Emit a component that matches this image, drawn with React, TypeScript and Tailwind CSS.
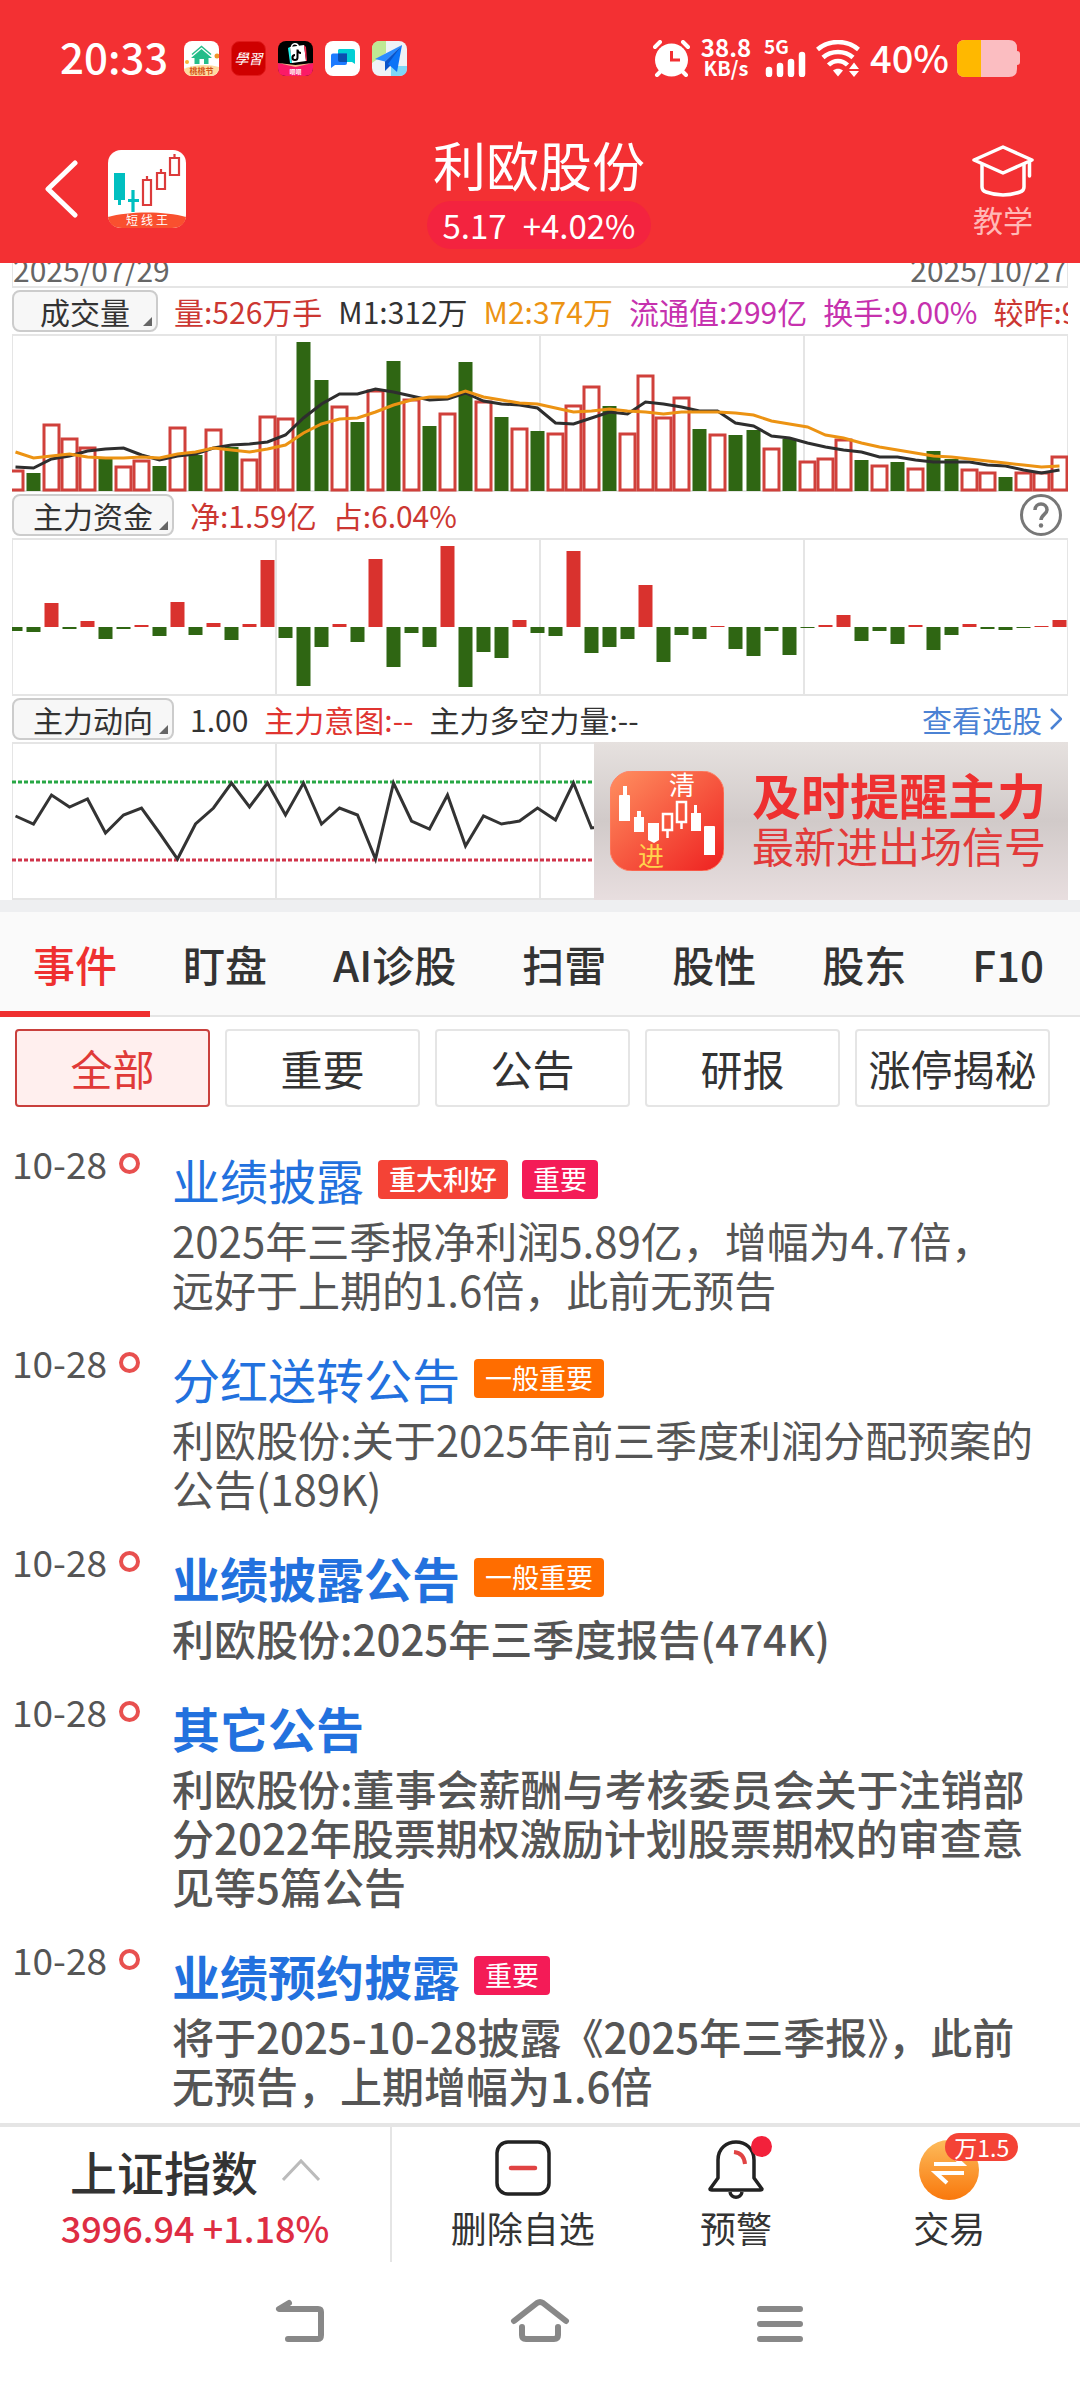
import React from 'react';

const UP = '#d9322e';
const DOWN = '#2f6613';

// [height, is up day]
const volumes: [number, boolean][] = [
  [20, true], [18, false], [66, true], [52, true], [43, true], [33, false], [24, true], [30, true], [25, false], [63, true],
  [36, false], [61, true], [44, false], [31, true], [74, true], [72, true], [149, false], [111, false], [84, true], [69, false],
  [100, true], [130, false], [91, true], [65, false], [77, true], [129, false], [89, true], [74, false], [62, true], [60, false],
  [57, true], [85, true], [104, true], [85, false], [57, true], [115, true], [73, true], [93, true], [62, false], [56, true],
  [56, false], [61, false], [42, true], [52, false], [29, true], [32, true], [51, true], [31, false], [25, true], [29, false],
  [22, true], [40, false], [32, false], [21, true], [18, true], [14, false], [18, true], [18, true], [34, true],
];

const ma1 = [
  24, 23, 32, 35, 40, 42, 43, 36, 31, 35, 37, 43, 46, 47, 49, 56, 73, 87, 97, 97, 102, 99, 95, 91, 92, 98, 90, 87, 86, 83, 68, 67,
  73, 79, 77, 89, 87, 84, 80, 80, 68, 65, 55, 53, 48, 44, 41, 39, 34, 34, 31, 29, 29, 29, 26, 25, 21, 18, 21,
];

const ma2 = [
  39, 33, 35, 37, 34, 33, 33, 34, 33, 37, 39, 43, 41, 39, 42, 46, 58, 67, 72, 73, 79, 86, 91, 94, 94, 100, 94, 91, 88, 87, 83, 79,
  80, 82, 80, 79, 77, 79, 79, 79, 78, 76, 70, 67, 64, 56, 53, 48, 44, 41, 38, 35, 34, 32, 30, 28, 26, 24, 25,
];

const funds = [
  -4, -5, 24, -2, 6, -12, -2, 2, -9, 25, -8, 4, -13, 3, 67, -11, -59, -20, 3, -15, 68, -40, -6, -20, 81, -60, -25, -31, 7, -6,
  -9, 76, -26, -20, -12, 42, -35, -8, -12, 1, -22, -29, -4, -28, -1, 2, 12, -14, -4, -17, 2, -23, -8, 3, -2, -3, -1, 1, 7,
];

const trend = [
  74, 82, 53, 65, 57, 91, 73, 66, 91, 117, 82, 66, 41, 65, 41, 73, 41, 82, 66, 73, 117, 41, 79, 87, 53, 104, 74, 82, 79, 66, 78,
  41, 86, 84,
];

const events = [
  {
    title: '业绩披露',
    tags: [
      { text: '重大利好', className: 'bg-[#f44336] font-medium' },
      { text: '重要', className: 'bg-[#f41b57] font-normal' },
    ],
    body: '2025年三季报净利润5.89亿，增幅为4.7倍，\n远好于上期的1.6倍，此前无预告',
    bold: false,
  },
  {
    title: '分红送转公告',
    tags: [{ text: '一般重要', className: 'bg-[#ff6d00] font-normal' }],
    body: '利欧股份:关于2025年前三季度利润分配预案的\n公告(189K)',
    bold: false,
  },
  {
    title: '业绩披露公告',
    tags: [{ text: '一般重要', className: 'bg-[#ff6d00] font-normal' }],
    body: '利欧股份:2025年三季度报告(474K)',
    bold: true,
  },
  {
    title: '其它公告',
    tags: [],
    body: '利欧股份:董事会薪酬与考核委员会关于注销部\n分2022年股票期权激励计划股票期权的审查意\n见等5篇公告',
    bold: true,
  },
  {
    title: '业绩预约披露',
    tags: [{ text: '重要', className: 'bg-[#f41b57] font-normal' }],
    body: '将于2025-10-28披露《2025年三季报》，此前\n无预告，上期增幅为1.6倍',
    bold: true,
  },
];

const cx = (i: number) => 3.5 + i * 18;

const points = (values: number[], toY: (v: number) => number) =>
  values.map((v, i) => `${cx(i)},${toY(v)}`).join(' ');

const ChartFrame = ({ children }: { children: React.ReactNode }) => (
  <svg viewBox="0 0 1056 158" preserveAspectRatio="none" className="block h-[158px] w-full">
    <g stroke="#e5e5e5" strokeWidth="2" fill="none">
      <path d="M0 1H1056M0 157H1056M264 0V158M528 0V158M792 0V158" />
      <path d="M.5 0V158M1055.5 0V158" strokeWidth="1" />
    </g>
    {children}
  </svg>
);

const VolumeChart = () => (
  <ChartFrame>
    {volumes.map(([h, up], i) =>
      up ? (
        <rect key={i} x={cx(i) - 7.5} y={157 - h} width="15" height={h - 1} fill="white" stroke="#d0403b" strokeWidth="3" />
      ) : (
        <rect key={i} x={cx(i) - 7} y={157 - h} width="14" height={h} fill={DOWN} />
      ),
    )}
    <polyline points={points(ma1, (v) => 157 - v)} fill="none" stroke="#2e2e2e" strokeWidth="3" />
    <polyline points={points(ma2, (v) => 157 - v)} fill="none" stroke="#ec9313" strokeWidth="3" />
  </ChartFrame>
);

const FundChart = () => (
  <ChartFrame>
    {funds.map((v, i) => (
      <rect key={i} x={cx(i) - 7} y={v > 0 ? 89 - v : 89} width="14" height={Math.abs(v)} fill={v > 0 ? UP : DOWN} />
    ))}
  </ChartFrame>
);

const TrendChart = () => (
  <ChartFrame>
    <path d="M0 40H1056" stroke="#28a745" strokeWidth="3" strokeDasharray="4 2" />
    <path d="M0 118H1056" stroke="#d0344a" strokeWidth="3" strokeDasharray="4 2" />
    <polyline points={points(trend, (v) => v)} fill="none" stroke="#333" strokeWidth="3" />
  </ChartFrame>
);

const Picker = ({ children, className }: { children: React.ReactNode; className: string }) => (
  <button
    className={`relative flex h-[42px] shrink-0 items-center justify-center rounded-lg border-2 border-[#ccc] bg-[#f7f7f7] text-[#333] ${className}`}
  >
    {children}
    <svg viewBox="0 0 9 9" className="absolute right-1 bottom-1 h-[9px] w-[9px]">
      <path d="M9 0V9H0Z" fill="#666" />
    </svg>
  </button>
);

const StatusBar = () => (
  <div className="flex h-[116px] items-center pr-[60px] pl-[60px]">
    <span className="pb-1 text-[42px] leading-none font-medium">20:33</span>
    <div className="ml-4 flex gap-3">
      <svg viewBox="0 0 35 35" className="h-[35px] w-[35px]">
        <rect width="35" height="35" rx="8" fill="#fff" />
        <path d="M0 28C10 23 25 23 35 26V27C35 31 31 35 27 35H8C4 35 0 32 0 28Z" fill="#ffdba0" />
        <path d="M17.500 8L28 17H24.500V23H20V18H15.500V23H10.500V17H7Z" fill="#25bd8a" />
        <path d="M8 13.500L17.500 5.500L27 13.500" stroke="#25bd8a" strokeWidth="1.500" fill="none" />
        <circle cx="33" cy="15" r="2.500" fill="#f0952b" />
        <circle cx="3" cy="21" r="2" fill="#f7b53c" />
        <text x="17.500" y="33" fontSize="8" fontWeight="700" textAnchor="middle" fill="#d4541a">桃桃节</text>
      </svg>
      <svg viewBox="0 0 35 35" className="h-[35px] w-[35px]">
        <rect x=".5" y=".5" width="34" height="34" rx="8" fill="#cf0000" stroke="#e01a1a" />
        <text x="17.500" y="23" fontSize="14" textAnchor="middle" fill="#fff" fontStyle="italic">學習</text>
      </svg>
      <svg viewBox="0 0 35 35" className="h-[35px] w-[35px]">
        <rect width="35" height="35" rx="8" fill="#000" />
        <path d="M0 22L17.500 25L35 22V27C35 32 32 35 27 35H8C3 35 0 32 0 27Z" fill="#fb1a67" />
        <path d="M0 22L17.500 24L35 22L17.500 26Z" fill="#f9b58a" />
        <path d="M13.500 7C13 1.500 20 1.500 20.500 6" stroke="#fff" strokeWidth="1.500" fill="none" />
        <path d="M10 7L12 22H14L12 6Z" fill="#25f4ee" />
        <path d="M12 6L26 4L28 20L14 22Z" fill="#fff" />
        <path d="M26 4L28 6L29 20H28Z" fill="#fe2c55" />
        <path d="M19.500 8.500V16.500A2.500 2.500 0 1 1 17 14M19.500 9C20 11 21 12 23 12" stroke="#000" strokeWidth="2" fill="none" />
        <text x="17.500" y="33" fontSize="6" fontWeight="700" textAnchor="middle" fill="#fff">呗呗</text>
      </svg>
      <svg viewBox="0 0 35 35" className="h-[35px] w-[35px]">
        <rect width="35" height="35" rx="8" fill="#fff" />
        <path d="M14 8H28Q30 8 30 10V23L27 21H15Q13 21 13 19V9Z" fill="#00cfd5" />
        <path d="M8 12.500H22V22Q22 24 20 24H10L6 27V14.500Q6 12.500 8 12.500Z" fill="#1d7bff" />
        <path d="M13 12.500H22V21H15Q13 21 13 19Z" fill="#0b4eae" />
      </svg>
      <svg viewBox="0 0 35 35" className="h-[35px] w-[35px]">
        <rect width="35" height="35" rx="8" fill="#eef2f6" />
        <path d="M8 0H14V12L0 22V8Q0 0 8 0Z" fill="#bfe894" />
        <path d="M19 25H35V27Q35 35 27 35H19Z" fill="#7fd7f7" />
        <path d="M30 4L3 18L13 20.500Z" fill="#2a8bff" />
        <path d="M30 4L13 20.500V30L18 25Z" fill="#0a54c9" />
        <path d="M30 4L16 23L25 31Z" fill="#0b73f7" />
      </svg>
    </div>
    <div className="ml-auto flex items-center">
      <svg viewBox="0 0 37 37" className="h-[37px] w-[37px]">
        <circle cx="18.500" cy="20" r="16.500" fill="#fff" />
        <path d="M2 7L7 2M35 7L30 2M4 35L8 31M33 35L29 31" stroke="#fff" strokeWidth="4" strokeLinecap="round" />
        <path d="M18.500 11V20H27" stroke="#f23033" strokeWidth="3" fill="none" />
      </svg>
      <div className="ml-3 flex w-12 flex-col items-center pb-0.5 font-bold">
        <span className="text-2xl leading-[22px]">38.8</span>
        <span className="text-[20px] leading-[20px]">KB/s</span>
      </div>
      <svg viewBox="0 0 44 37" className="ml-3.5 h-[37px] w-[44px]">
        <text x="0" y="14" fontSize="19" fontWeight="700" fill="#fff">5G</text>
        <path d="M5 30V34M16 26V34M27 22V34M38 15V34" stroke="#fff" strokeWidth="6.500" strokeLinecap="round" />
      </svg>
      <svg viewBox="0 0 44 37" className="ml-2 h-[37px] w-[44px]">
        <g fill="none" stroke="#fff" strokeWidth="4.500">
          <path d="M1.500 9.500C13 -.5 31 -.5 42.500 9.500" />
          <path d="M7 17.500C15 10 29 10 37 17.500" />
          <path d="M12.500 25C18 19.500 26 19.500 31.500 25" />
        </g>
        <path d="M17 30.500C20 28 24 28 27 30.500L22 36.500Z" fill="#fff" />
        <path d="M33 29L38 22.500L43 29ZM33 31H43L38 37Z" fill="#fff" />
      </svg>
      <span className="ml-2.5 pb-0.5 text-[38px] leading-none font-medium">40%</span>
      <svg viewBox="0 0 63 37" className="ml-2 h-[37px] w-[63px]">
        <path d="M8 0H52Q60 0 60 8V11Q63 11 63 14V22Q63 25 60 25V29Q60 37 52 37H8Q0 37 0 29V8Q0 0 8 0Z" fill="#fbbdc1" />
        <path d="M8 0H24V37H8Q0 37 0 29V8Q0 0 8 0Z" fill="#ffb800" />
      </svg>
    </div>
  </div>
);

const TitleBar = () => (
  <div className="grid h-[147px] grid-cols-[1fr_auto_1fr] items-end pr-[46px] pl-11">
    <div className="flex items-center gap-[30px] pb-[35px]">
      <button aria-label="返回">
        <svg viewBox="0 0 34 58" className="h-[58px] w-[34px]">
          <path d="M31 3L4 29L31 55" fill="none" stroke="#fff" strokeWidth="5" strokeLinecap="round" strokeLinejoin="round" />
        </svg>
      </button>
      <svg viewBox="0 0 78 78" className="h-[78px] w-[78px]">
        <rect width="78" height="78" rx="13" fill="#fff" />
        <path d="M0 67C20 61 58 61 78 67Q76 78 64 78H14Q2 78 0 67Z" fill="#f9502f" />
        <path d="M6 23H17V50H13V55H10V50H6Z" fill="#00bfc0" />
        <path d="M25 40V62M20 50.500H31" stroke="#00bfc0" strokeWidth="3.200" />
        <g fill="none" stroke="#dc3b3b" strokeWidth="2.200">
          <path d="M35 30H43V55H35ZM39 30V26" />
          <path d="M49 23H57V39H49ZM53 23V19" />
          <path d="M62 8H71V25H62ZM66.500 8V4" />
        </g>
        <text x="24" y="75" fontSize="12" textAnchor="middle" fill="#fff">短</text>
        <text x="39" y="75" fontSize="12" textAnchor="middle" fill="#fff">线</text>
        <text x="54" y="75" fontSize="12" textAnchor="middle" fill="#fff">王</text>
      </svg>
    </div>
    <div className="flex flex-col items-center pb-3.5">
      <h1 className="pb-1 text-[53px] leading-[66px]">利欧股份</h1>
      <div className="flex h-12 items-center gap-4 rounded-full bg-[#f3233f] px-4 text-[33px] leading-none">
        <span>5.17</span>
        <span>+4.02%</span>
      </div>
    </div>
    <button className="flex flex-col items-center justify-self-end pb-[26px] text-[30px] leading-[36px] text-[#ffb9b7]">
      <svg viewBox="0 0 62 52" className="mb-1 h-[52px] w-[62px]">
        <g fill="none" stroke="#fff" strokeWidth="3.500" strokeLinejoin="round" strokeLinecap="round">
          <path d="M31 2L60 15L31 28L2 15Z" />
          <path d="M10 20V42Q10 46 14 47Q31 53 48 47Q52 46 52 42V20" />
          <path d="M57.500 17V31" />
        </g>
      </svg>
      教学
    </button>
  </div>
);

const Charts = () => (
  <section className="px-3 text-[30px] leading-none text-[#333]">
    <div className="flex h-[25px] items-end justify-between overflow-hidden border-x border-b-2 border-[#e5e5e5] leading-[34px] text-[#666]">
      <span>2025/07/29</span>
      <span>2025/10/27</span>
    </div>
    <div className="flex h-[46px] items-center gap-4 overflow-hidden whitespace-nowrap">
      <Picker className="w-[146px]">成交量</Picker>
      <span className="text-[#cc3732]">量:526万手</span>
      <span>M1:312万</span>
      <span className="text-[#ec9313]">M2:374万</span>
      <span className="text-[#c631ae]">流通值:299亿</span>
      <span className="text-[#c631ae]">换手:9.00%</span>
      <span className="text-[#cc3732]">较昨:93%</span>
    </div>
    <VolumeChart />
    <div className="flex h-[46px] items-center gap-4">
      <Picker className="w-[162px]">主力资金</Picker>
      <span className="text-[#cc3732]">净:1.59亿</span>
      <span className="text-[#cc3732]">占:6.04%</span>
      <button aria-label="帮助" className="mr-1.5 ml-auto flex h-[42px] w-[42px] items-center justify-center rounded-full border-3 border-[#777] text-[#777]">
        <svg viewBox="0 0 20 28" className="h-7 w-5">
          <path d="M4 9C4 1 16 1 16 9C16 13 10 14 10 19" fill="none" stroke="#777" strokeWidth="3.500" />
          <circle cx="10" cy="24.500" r="2.200" fill="#777" />
        </svg>
      </button>
    </div>
    <FundChart />
    <div className="flex h-[46px] items-center gap-4 whitespace-nowrap">
      <Picker className="w-[162px]">主力动向</Picker>
      <span>1.00</span>
      <span className="text-[#e03430]">主力意图:--</span>
      <span>主力多空力量:--</span>
      <a href="#" className="mr-1.5 ml-auto flex items-center gap-2 text-[#4b82d4]">
        查看选股
        <svg viewBox="0 0 12 22" className="h-[22px] w-3">
          <path d="M1 1L11 11L1 21" fill="none" stroke="#4b82d4" strokeWidth="2.500" />
        </svg>
      </a>
    </div>
    <div className="relative">
      <TrendChart />
      <a href="#" className="absolute inset-y-0 right-0 flex w-[474px] items-center gap-7 bg-linear-to-b from-[#e6e1df] via-[#d1cac9] to-[#e8dedf] pl-4">
        <svg viewBox="0 0 114 100" className="h-[100px] w-[114px]">
          <defs>
            <linearGradient id="signal" x1="0" y1="0" x2="1" y2="1">
              <stop offset="0" stopColor="#ff9060" />
              <stop offset="1" stopColor="#ee2020" />
            </linearGradient>
          </defs>
          <rect width="114" height="100" rx="22" fill="url(#signal)" stroke="#ff8066" />
          <g fill="#fff">
            <path d="M9 25Q9 24 10 24H13V15H17V24H19Q20 24 20 25V50H9ZM24 46H27V40H31V46H34V61H24ZM38 52H49V69L44 72L38 69ZM81 42H84V34H87V42H91V60H81ZM94 56Q94 55 95 55H104Q105 55 105 56V84H94Z" />
          </g>
          <g fill="none" stroke="#fff" strokeWidth="2.500">
            <path d="M53 43H62V59H53ZM57.500 59V67" />
            <path d="M67 31H76V51H67ZM71.500 51V58" />
          </g>
          <text x="72" y="24" fontSize="26" textAnchor="middle" fill="#fff">清</text>
          <text x="41" y="95" fontSize="26" textAnchor="middle" fill="#ffd34d">进</text>
        </svg>
        <div className="pb-1.5 whitespace-nowrap">
          <div className="text-[49px] leading-[54px] font-bold text-[#ee3030]">及时提醒主力</div>
          <div className="text-[42px] leading-[48px] text-[#e23a3a]">最新进出场信号</div>
        </div>
      </a>
    </div>
  </section>
);

const tabs = ['事件', '盯盘', 'AI诊股', '扫雷', '股性', '股东', 'F10'];
const filters = ['全部', '重要', '公告', '研报', '涨停揭秘'];

const EventList = () => (
  <ul className="mt-[42px]">
    {events.map((event, index) => (
      <li key={index} className="flex items-start pb-[35px] pl-3 last:pb-3.5">
        <span className="w-[107px] text-[37px] leading-7 text-[#555]">10-28</span>
        <span className="mt-1 h-[21px] w-[21px] shrink-0 rounded-full border-4 border-[#e8504f]" />
        <div className="ml-8">
          <div className="flex h-[60px] items-center">
            <a href="#" className={`text-[48px] leading-none text-[#2271de] ${event.bold ? 'font-bold' : ''}`}>
              {event.title}
            </a>
            {event.tags.map((tag) => (
              <span
                key={tag.text}
                className={`ml-3.5 flex h-[39px] items-center rounded px-[11px] pb-0.5 text-[27px] leading-none text-white ${tag.className}`}
              >
                {tag.text}
              </span>
            ))}
          </div>
          <p className={`mt-1.5 text-[42px] leading-[49px] whitespace-pre text-[#555] ${event.bold ? 'font-medium' : ''}`}>
            {event.body}
          </p>
        </div>
      </li>
    ))}
  </ul>
);

const BottomBar = () => (
  <footer className="flex h-[139px] border-t-4 border-[#e5e5e5] text-4xl leading-none text-[#333]">
    <button className="flex w-[392px] flex-col items-center border-r-2 border-[#e5e5e5]">
      <span className="flex h-[86px] items-center gap-6 text-[47px] font-medium">
        上证指数
        <svg viewBox="0 0 38 24" className="h-6 w-[38px]">
          <path d="M1 22L19 3L37 22" fill="none" stroke="#bbb" strokeWidth="3" />
        </svg>
      </span>
      <span className="flex h-7 items-center font-medium text-[#de2d43]">3996.94 +1.18%</span>
    </button>
    <div className="grid flex-1 grid-cols-3 px-6 pt-2.5">
      <button className="flex flex-col items-center">
        <svg viewBox="0 0 60 66" className="h-[66px] w-[60px]">
          <rect x="4" y="5" width="52" height="52" rx="11" fill="none" stroke="#222" strokeWidth="3.500" />
          <path d="M18 31H42" stroke="#e04343" strokeWidth="4.500" strokeLinecap="round" />
        </svg>
        <span className="mt-1.5">删除自选</span>
      </button>
      <button className="flex flex-col items-center">
        <span className="relative">
          <svg viewBox="0 0 60 66" className="h-[66px] w-[60px]">
            <g fill="none" stroke="#222" strokeWidth="3.500" strokeLinejoin="round">
              <path d="M12 41V23C12 -1 48 -1 48 23V41L56 52Q56 53 54 53H6Q4 53 4 52Z" />
              <path d="M24 55C25 62 35 62 36 55" />
            </g>
            <path d="M28 15Q38 16 39 27" fill="none" stroke="#e04343" strokeWidth="4" />
          </svg>
          <span className="absolute -top-px -right-1.5 h-[21px] w-[21px] rounded-full bg-[#f3213b]" />
        </span>
        <span className="mt-1.5">预警</span>
      </button>
      <button className="flex flex-col items-center">
        <span className="relative">
          <svg viewBox="0 0 60 66" className="h-[66px] w-[60px]">
            <defs>
              <linearGradient id="trade" x1="0" y1="0" x2="0" y2="1">
                <stop offset="0" stopColor="#fdbb5b" />
                <stop offset="1" stopColor="#f9780c" />
              </linearGradient>
            </defs>
            <circle cx="30" cy="33" r="30" fill="url(#trade)" />
            <path d="M15 27H43L32 17M45 36H17L28 46" fill="none" stroke="#fff" strokeWidth="4" />
          </svg>
          <span className="absolute -top-1 left-[26px] flex h-7 w-[73px] items-center justify-center rounded-full bg-[#f44336] text-[23px] whitespace-nowrap text-white">
            万1.5
          </span>
        </span>
        <span className="mt-1.5">交易</span>
      </button>
    </div>
  </footer>
);

const SystemNav = () => (
  <nav className="flex h-[126px] items-center justify-center gap-[180px] pb-2">
    <button aria-label="返回">
      <svg viewBox="0 0 60 46" className="h-[46px] w-[60px]">
        <path d="M19 5L9 11H48Q51 11 51 14V37Q51 41 48 41H18" fill="none" stroke="#888" strokeWidth="6" strokeLinecap="round" strokeLinejoin="round" />
      </svg>
    </button>
    <button aria-label="主页">
      <svg viewBox="0 0 60 46" className="h-[46px] w-[60px]">
        <g fill="none" stroke="#888" strokeWidth="6" strokeLinecap="round" strokeLinejoin="round">
          <path d="M4 23L27 5Q30 3 33 5L56 23" />
          <path d="M12 29V37Q12 41 16 41H44Q48 41 48 37V29" />
        </g>
      </svg>
    </button>
    <button aria-label="菜单">
      <svg viewBox="0 0 60 46" className="h-[46px] w-[60px]">
        <path d="M10 11H50M10 26H50M10 41H50" stroke="#888" strokeWidth="6" strokeLinecap="round" />
      </svg>
    </button>
  </nav>
);

const App = () => {
  return (
    <div className="w-full overflow-hidden bg-white font-['Noto_Sans_CJK_SC',sans-serif]">
      <header className="bg-[#f33033] text-white">
        <StatusBar />
        <TitleBar />
      </header>
      <Charts />
      <div className="h-3 bg-[#eeeff1]" />
      <nav className="flex h-[105px] border-b-2 border-[#e5e5e5] bg-[#fafafa] text-[42px] leading-none font-medium whitespace-nowrap text-[#333]">
        {tabs.map((tab, i) => (
          <button key={tab} className={i === 0 ? '-mb-0.5 border-b-6 border-[#ef3030] px-[33px] pt-1 text-[#ef3030]' : 'px-[33px]'}>
            {tab}
          </button>
        ))}
      </nav>
      <div className="mt-3 grid grid-cols-5 gap-[15px] pr-[30px] pl-[15px] text-[42px] leading-none whitespace-nowrap text-[#333]">
        {filters.map((filter, i) => (
          <button
            key={filter}
            className={i === 0 ? 'h-[78px] rounded border-2 border-[#c9403d] bg-[#ffefee] text-[#e03a38]' : 'h-[78px] rounded border-2 border-[#e5e5e5]'}
          >
            {filter}
          </button>
        ))}
      </div>
      <EventList />
      <BottomBar />
      <SystemNav />
    </div>
  );
};

export default App;
